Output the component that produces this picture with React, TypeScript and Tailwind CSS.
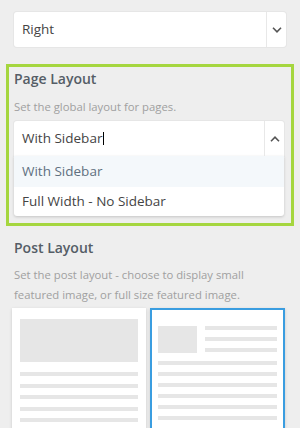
import React from 'react';

function Chevron({ up = false }: { up?: boolean }) {
  return (
    <svg width="10" height="6" viewBox="0 0 10 6" className="block">
      <path
        d={up ? 'M1 5.2 L5 1.2 L9 5.2' : 'M1 0.8 L5 4.8 L9 0.8'}
        fill="none"
        stroke="#555"
        strokeWidth="1.6"
      />
    </svg>
  );
}

function Select({ value, open = false }: { value: string; open?: boolean }) {
  return (
    <div
      className={`flex h-[35px] items-stretch bg-white shadow-[0_0_0_1px_#e6e6e6] ${open ? 'rounded-t-[3px]' : 'rounded-[3px]'}`}
    >
      <div className="flex flex-1 items-center pl-[8px] text-[13.5px] text-[#444]">
        <span>{value}</span>
        {open && <span className="ml-[1px] h-[13px] w-px bg-black" />}
      </div>
      <div className="flex w-[20px] items-center justify-center border-l border-[#e8e8e8]">
        <Chevron up={open} />
      </div>
    </div>
  );
}

function Bar({ w = 'w-full' }: { w?: string }) {
  return <div className={`h-[4px] bg-[#e6e6e6] ${w}`} />;
}

export default function App() {
  return (
    <div
      className="h-[428px] w-[300px] overflow-hidden bg-[#eeeeee] pt-[12px]"
      style={{ fontFamily: '"Open Sans", "Liberation Sans", sans-serif' }}
    >
      {/* Top select */}
      <div className="px-[14px]">
        <div className="h-[36px]">
          <Select value="Right" />
        </div>
      </div>

      {/* Page layout, focused */}
      <div className="mx-[6px] mt-[16px] border-[3px] border-[#a5d63f] pb-[7px] pl-[5px] pr-[7px] pt-[2px]">
        <div className="text-[14px] font-semibold leading-[20px] text-[#555d66]">Page Layout</div>
        <div className="mt-[9px] text-[11.3px] leading-[18px] text-[#a0a0a0]">
          Set the global layout for pages.
        </div>
        <div className="mt-[5px]">
          <Select value="With Sidebar" open />
          <div className="rounded-b-[3px] bg-white text-[13.5px] shadow-[0_1px_3px_rgba(0,0,0,0.18)]">
            <div className="flex h-[31px] items-center bg-[#f4f8fb] pl-[8px] text-[#607080]">With Sidebar</div>
            <div className="flex h-[29px] items-center pl-[8px] text-[#444]">Full Width - No Sidebar</div>
          </div>
        </div>
      </div>

      {/* Post layout */}
      <div className="px-[12px] pt-[12px]">
        <div className="pl-[2px] text-[14px] font-semibold leading-[20px] text-[#555d66]">Post Layout</div>
        <div className="mt-[7px] pl-[2px] text-[11.3px] leading-[20px] text-[#a0a0a0]">
          Set the post layout - choose to display small featured image, or full size featured image.
        </div>
        <div className="mt-[3px] flex gap-[4px]">
          <div className="h-[130px] w-[134px] bg-white px-[8px] pt-[11px] shadow-[0_1px_3px_rgba(0,0,0,0.15)]">
            <div className="h-[43px] bg-[#e6e6e6]" />
            <div className="mt-[10px] flex flex-col gap-[7.5px]">
              <Bar />
              <Bar />
              <Bar />
              <Bar />
              <Bar />
            </div>
          </div>
          <div className="h-[130px] w-[135px] border-2 border-[#3a9de0] bg-white px-[6px] pt-[16px] shadow-[0_1px_3px_rgba(0,0,0,0.15)]">
            <div className="flex gap-[8px]">
              <div className="h-[27px] w-[39px] bg-[#e6e6e6]" />
              <div className="flex flex-1 flex-col gap-[7px]">
                <Bar />
                <Bar />
                <Bar />
              </div>
            </div>
            <div className="mt-[8px] flex flex-col gap-[7px]">
              <Bar />
              <Bar />
              <Bar />
              <Bar />
              <Bar />
              <Bar />
            </div>
          </div>
        </div>
      </div>
    </div>
  );
}
